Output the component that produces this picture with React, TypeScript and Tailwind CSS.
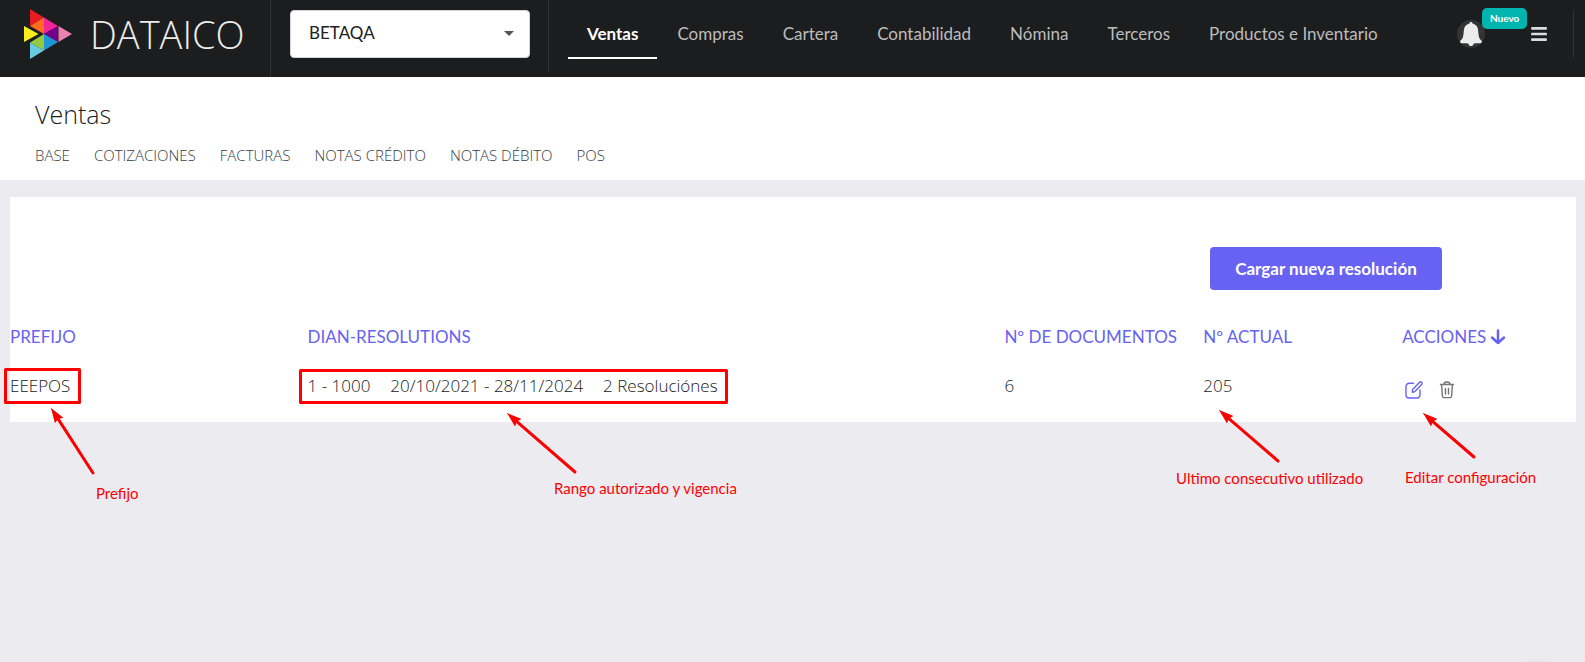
import { useState } from 'react';
import { FaBars } from 'react-icons/fa';

const NAV = ['Ventas', 'Compras', 'Cartera', 'Contabilidad', 'Nómina', 'Terceros', 'Productos e Inventario'];

const SUB_NAV = ['BASE', 'COTIZACIONES', 'FACTURAS', 'NOTAS CRÉDITO', 'NOTAS DÉBITO', 'POS'];

const ROWS = [
  {
    prefix: 'EEEPOS',
    range: '1 - 1000',
    dates: '20/10/2021 - 28/11/2024',
    count: '2 Resoluciónes',
    documents: 6,
    current: 205,
  },
];

const NOTES = [
  { text: 'Prefijo', pos: 'left-[96px] top-[483px]' },
  { text: 'Rango autorizado y vigencia', pos: 'left-[554px] top-[478px]' },
  { text: 'Ultimo consecutivo utilizado', pos: 'left-[1176px] top-[468px]' },
  { text: 'Editar configuración', pos: 'left-[1405px] top-[467px]' },
];

// each arrow runs from x1/y1 to its tip at x2/y2
const ARROWS = [
  { x1: 93, y1: 473, x2: 51, y2: 408 },
  { x1: 575, y1: 472, x2: 507, y2: 413 },
  { x1: 1278, y1: 461, x2: 1219, y2: 410 },
  { x1: 1474, y1: 457, x2: 1423, y2: 413 },
];

function Logo() {
  return (
    <svg viewBox="0 0 48 50" className="h-[50px] w-[48px]" aria-hidden="true">
      <path d="M6 0 20 8.5 6 17Z" fill="#e81c23" />
      <path d="M6 17 20 8.5V25Z" fill="#ff6b1f" />
      <path d="M20 8.5 34 17 20 25Z" fill="#f0259b" />
      <path d="M34 17V33L20 25Z" fill="#72008c" />
      <path d="M34.5 17 48 25 34.5 33Z" fill="#ec80b1" />
      <path d="M0 17 14.5 25 0 33Z" fill="#f8ee1f" />
      <path d="M20 25V41.500L6 33.500Z" fill="#96c93d" />
      <path d="M20 25 34 33 20 41.500Z" fill="#2196d6" />
      <path d="M6 33.500 20 41.500 6 50Z" fill="#66cbe1" />
    </svg>
  );
}

function BellIcon() {
  return (
    <svg viewBox="0 0 22 24" className="h-6 w-[22px] shrink-0" fill="currentColor" aria-hidden="true">
      <path d="M11 0c.9 0 1.500.6 1.500 1.400 3.600.8 5.500 3.400 5.700 7 .3 5.600.8 8 3.200 10.200.8.8.5 2.600-1 2.600h-5.500c-.4.500-1.200.4-1.500.7C13.200 23.300 12.300 24 11 24s-2.200-.7-2.400-2.100c-.3-.3-1.100-.2-1.500-.7H1.600c-1.500 0-1.800-1.800-1-2.600C3 16.400 3.500 14 3.800 8.400c.2-3.600 2.100-6.200 5.700-7C9.500.6 10.100 0 11 0Z" />
    </svg>
  );
}

function EditIcon() {
  return (
    <svg viewBox="0 0 20 20" className="size-5" fill="none" stroke="currentColor" strokeWidth="1.4" strokeLinecap="round" strokeLinejoin="round">
      <path d="M9.500 3.200H5.200a3.200 3.200 0 0 0-3.200 3.200v8.400A3.200 3.200 0 0 0 5.200 18h7.600a3.200 3.200 0 0 0 3.200-3.200V10" />
      <path d="M8.300 12.200 8.600 9.400 15.400 2.400a1.500 1.500 0 0 1 2.200 2.100L10.900 11.600Z" />
    </svg>
  );
}

function TrashIcon() {
  return (
    <svg viewBox="0 0 20 20" className="size-5" fill="none" stroke="currentColor" strokeWidth="1.4" strokeLinecap="round" strokeLinejoin="round">
      <path d="M3.500 4.500h13M7 4.300c0-3 6-3 6 0" />
      <path d="M4.600 4.700 5.400 16a1.800 1.800 0 0 0 1.800 1.600h5.600A1.800 1.800 0 0 0 14.600 16l.8-11.300" />
      <path d="M8.500 8.500v5.500M11.500 8.500v5.500" />
    </svg>
  );
}

function SortArrow() {
  return (
    <svg viewBox="0 0 16 16" className="size-4" fill="none" stroke="currentColor" strokeWidth="2.500" strokeLinecap="round" strokeLinejoin="round" aria-hidden="true">
      <path d="M8 1.500v12.500M2 8.500l6 5.500 6-5.500" />
    </svg>
  );
}

function Header() {
  const [company, setCompany] = useState('BETAQA');
  const [active, setActive] = useState('Ventas');

  return (
    <header className="flex h-[77px] items-start bg-[#1c1d1e]">
      <a href="#" className="flex h-full w-[271px] shrink-0 items-start border-r border-[#313233] pt-[9px] pl-6">
        <Logo />
        <span className="ml-[18px] font-['Open_Sans',sans-serif] text-[38px] leading-[50px] font-light text-[#ececec]">
          DATAICO
        </span>
      </a>

      <div className="h-[72px] w-[278px] shrink-0 border-r border-[#313233] pt-[10px] pl-[19px]">
        <div className="relative w-[240px]">
          <select
            aria-label="Empresa"
            value={company}
            onChange={(e) => setCompany(e.target.value)}
            className="h-12 w-full appearance-none rounded border border-gray-300 bg-white pb-[2px] pl-[18px] text-[17px] text-[#212121]"
          >
            <option>BETAQA</option>
          </select>
          <svg viewBox="0 0 10 5" className="pointer-events-none absolute top-[21px] right-4 h-[5px] w-[10px]" aria-hidden="true">
            <path d="M0 0h10L5 5Z" fill="#555" />
          </svg>
        </div>
      </div>

      <nav className="ml-[19px] flex grow gap-px pt-[10px]">
        {NAV.map((item) => (
          <button
            key={item}
            type="button"
            onClick={() => setActive(item)}
            className={`h-[49px] border-b-2 px-[19px] text-[17px] whitespace-nowrap ${
              active === item ? 'border-white font-bold text-white' : 'border-transparent text-[#bcbcbd]'
            }`}
          >
            {item}
          </button>
        ))}
      </nav>

      <div className="mt-[10px] mr-[11px] flex h-12 shrink-0 items-center border-r border-[#313233] pr-[25px]">
        <button type="button" aria-label="Notificaciones" className="relative mr-[45px] flex size-7 items-center justify-center rounded-full bg-[#333435] text-[#ececec]">
          <BellIcon />
          <span className="absolute bottom-[19px] left-[25px] rounded-[5px] bg-[#00b5ad] px-2 text-[10px] leading-[21px] font-bold text-white">
            Nuevo
          </span>
        </button>
        <button type="button" aria-label="Menú" className="text-[#dcdcdc]">
          <FaBars size={18} />
        </button>
      </div>
    </header>
  );
}

function SubHeader() {
  return (
    <div className="bg-white px-[35px] pt-[19px] pb-[14px] font-['Open_Sans',sans-serif] font-light">
      <h1 className="text-[25px] leading-9 text-[#1b1c1d]">Ventas</h1>
      <nav className="mt-[13px] flex gap-6 text-[15px] leading-[21px] text-[#333c45]">
        {SUB_NAV.map((item) => (
          <a key={item} href="#">{item}</a>
        ))}
      </nav>
    </div>
  );
}

function Resolutions() {
  return (
    <main className="mt-[17px] mr-[9px] ml-[10px] bg-white pt-[50px]">
      <div className="flex justify-end pr-[134px]">
        <button type="button" className="h-[43px] w-[232px] rounded bg-[#6762f2] text-[17px] font-bold text-white">
          Cargar nueva resolución
        </button>
      </div>

      <table className="mt-[23px] w-full table-fixed text-left">
        <thead className="text-[17px] text-[#6762f2]">
          <tr className="h-12">
            <th className="w-[19%] font-normal">PREFIJO</th>
            <th className="w-[44.5%] font-normal">DIAN-RESOLUTIONS</th>
            <th className="w-[12.7%] font-normal whitespace-nowrap">Nº DE DOCUMENTOS</th>
            <th className="w-[12.7%] font-normal">Nº ACTUAL</th>
            <th className="font-normal">
              <span className="flex items-center gap-1">
                ACCIONES
                <SortArrow />
              </span>
            </th>
          </tr>
        </thead>
        <tbody className="font-['Open_Sans',sans-serif] text-[17px] font-light text-[#212121]">
          {ROWS.map((row) => (
            <tr key={row.prefix} className="h-[61px]">
              <td className="pb-3">{row.prefix}</td>
              <td className="pb-3">
                <span className="flex gap-5 whitespace-nowrap">
                  <span>{row.range}</span>
                  <span>{row.dates}</span>
                  <span>{row.count}</span>
                </span>
              </td>
              <td className="pb-3">{row.documents}</td>
              <td className="pb-3">{row.current}</td>
              <td className="pb-1 pl-[2px]">
                <span className="flex gap-[13px]">
                  <button type="button" aria-label="Editar" className="text-[#6762f2]"><EditIcon /></button>
                  <button type="button" aria-label="Eliminar" className="text-[#757575]"><TrashIcon /></button>
                </span>
              </td>
            </tr>
          ))}
        </tbody>
      </table>
    </main>
  );
}

// Red boxes, arrows and notes on top of the page
function Annotations() {
  return (
    <div className="pointer-events-none absolute inset-0 overflow-hidden">
      <svg className="absolute inset-0 size-full" aria-hidden="true">
        <defs>
          <marker id="head" viewBox="0 0 15 10" refX="15" refY="5" markerWidth="15" markerHeight="10" markerUnits="userSpaceOnUse" orient="auto">
            <path d="M15 5 0 0 2 5 0 10Z" fill="#f00" />
          </marker>
        </defs>
        <g fill="none" stroke="#f00" strokeWidth="3" strokeLinejoin="round">
          <rect x="5.5" y="369.5" width="74" height="33" />
          <rect x="300.5" y="370.5" width="426" height="32" />
        </g>
        {ARROWS.map((a) => {
          // the shaft stops inside the head so that the tip stays sharp
          const len = Math.hypot(a.x2 - a.x1, a.y2 - a.y1);
          const k = (len - 10) / len;
          return (
            <g key={a.x1} stroke="#f00">
              <line x1={a.x1} y1={a.y1} x2={a.x1 + (a.x2 - a.x1) * k} y2={a.y1 + (a.y2 - a.y1) * k} strokeWidth="3" strokeLinecap="round" />
              <line x1={a.x1} y1={a.y1} x2={a.x2} y2={a.y2} strokeWidth="0.5" markerEnd="url(#head)" />
            </g>
          );
        })}
      </svg>
      {NOTES.map((n) => (
        <span key={n.text} className={`absolute text-[15px] leading-5 whitespace-nowrap text-[#f00] ${n.pos}`}>
          {n.text}
        </span>
      ))}
    </div>
  );
}

export default function App() {
  return (
    <div className="relative min-h-screen overflow-hidden bg-[#ecebf0] font-[Lato,sans-serif]">
      <Header />
      <SubHeader />
      <Resolutions />
      <Annotations />
      <div className="absolute right-5 -bottom-[60px] size-14 rounded-full shadow-[0_0_10px_rgba(0,0,0,0.2)]" />
    </div>
  );
}
